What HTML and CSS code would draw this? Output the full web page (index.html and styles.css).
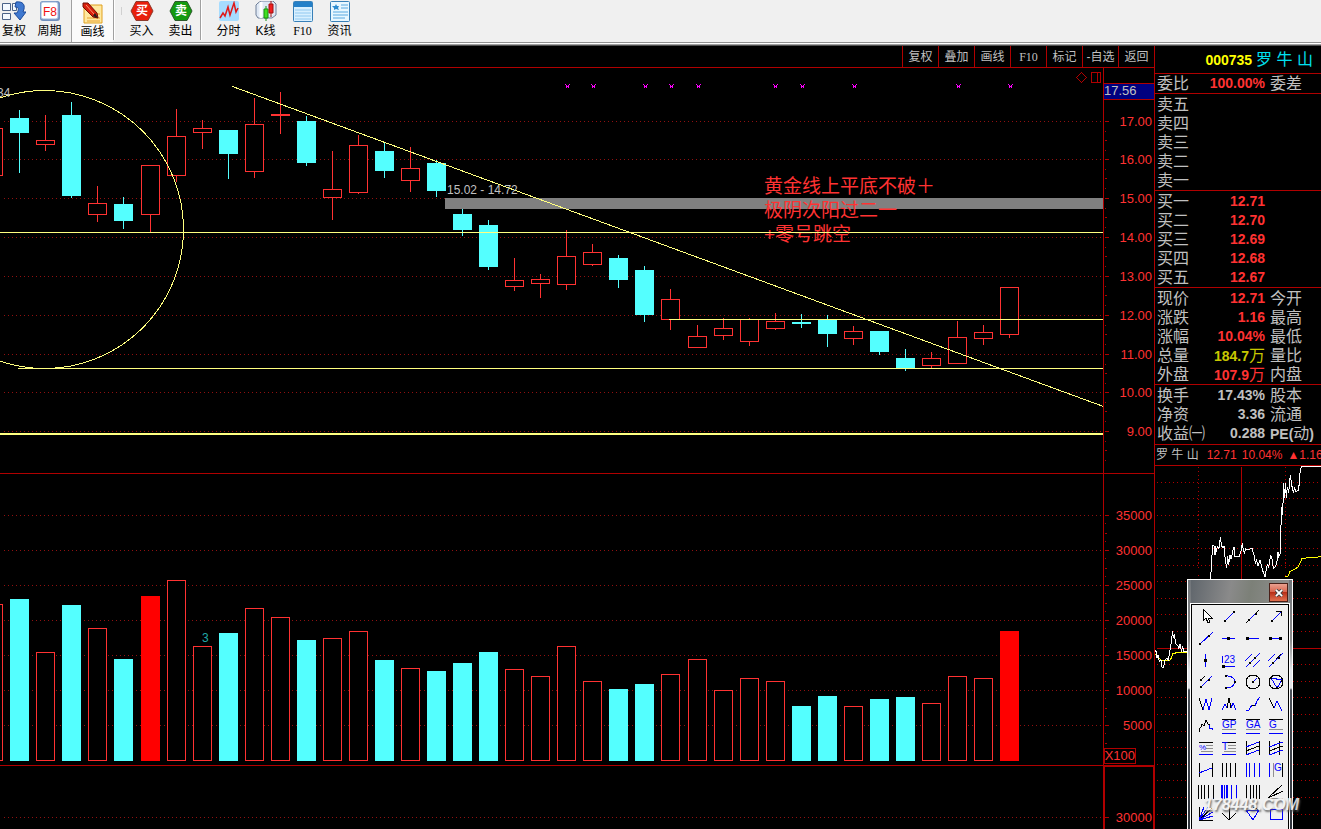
FILE: index.html
```html
<!DOCTYPE html>
<html lang="zh-CN">
<head>
<meta charset="utf-8">
<title>罗牛山 000735</title>
<link rel="stylesheet" href="styles.css">
</head>
<body>
<header class="toolbar">
  <button class="tool tool-first"><svg width="24" height="20" viewBox="0 0 24 20"><g stroke="#4a6288" fill="#f4f9ff"><path d="M.5 2.500h8v7h-8zM.5 12.500h8v6h-8zM10.500 2.500h4v7h-4z"/></g><path d="M14 1c7-1 9 3 8 7l-1 3h3l-6 8-6-7h3c2-4 2-6-2-6z" fill="#3f78d0" stroke="#1c4b9a"/></svg><span>复权</span></button>
  <button class="tool tool-wide"><svg width="22" height="20" viewBox="0 0 22 20"><rect x="1" y="0" width="20" height="20" rx="3" fill="#6f8fbd"/><rect x="2" y="1" width="17" height="17" rx="2" fill="#fff" stroke="#9ab4d8"/><text x="4" y="15" class="key">F8</text></svg><span>周期</span></button>
  <button class="tool tool-on" aria-pressed="true"><svg width="22" height="22" viewBox="0 0 22 22"><path d="M2 3h18v18H2z" fill="#ffe9a0" stroke="#e0a020"/><path d="M5 16h13M5 19h13M14 12h4" stroke="#e8a030"/><path d="M1 1l5 0 9 10 1 5-5-1L1 5z" fill="#d8200c" stroke="#701008"/><path d="M13 11l3 5-5-2z" fill="#222"/><path d="M4 3l8 9" stroke="#ff9070"/></svg><span>画线</span></button>
  <i class="rule"></i><i class="grip"></i>
  <button class="tool tool-trade"><svg width="24" height="20" viewBox="0 0 24 20"><path d="M6 .5h12l5 9.500-5 9.500H6L1 10z" fill="#e8200c" stroke="#8d3a2c"/><text x="12" y="14" class="badge">买</text></svg><span>买入</span></button>
  <button class="tool tool-trade"><svg width="24" height="20" viewBox="0 0 24 20"><path d="M6 .5h12l5 9.500-5 9.500H6L1 10z" fill="#149a10" stroke="#2c5a2c"/><text x="12" y="14" class="badge">卖</text></svg><span>卖出</span></button>
  <i class="rule rule-gap"></i>
  <button class="tool"><svg width="20" height="20" viewBox="0 0 20 20"><rect width="20" height="20" rx="2" fill="#a6dcff"/><path d="M1 17l3-5 2 3 3-9 2 8 4-12 2 9 2-4" fill="none" stroke="#e01818" stroke-width="1.500"/></svg><span>分时</span></button>
  <button class="tool"><svg width="22" height="20" viewBox="0 0 22 20"><path d="M3 2l3-2h12l3 3v11l-4 3H3l-2-3V4z" fill="#dfe8f4" stroke="#6f7f98"/><path d="M6 1v16M16 2v12" stroke="#fff" stroke-width="3"/><path d="M11 5v15" stroke="#109010"/><path d="M9 8h4v9H9z" fill="#40e020" stroke="#189010"/><path d="M16 0v16" stroke="#a01010"/><path d="M14 3h4v9h-4z" fill="#f02020" stroke="#a01010"/></svg><span>K线</span></button>
  <button class="tool"><svg width="20" height="21" viewBox="0 0 20 21"><rect x=".5" y=".5" width="19" height="20" rx="1" fill="#d8f0ff" stroke="#3880b8"/><path d="M1 1h18v5H1z" fill="#2480c8"/><path d="M2 9h16M2 12h16M2 15h16M2 18h16" stroke="#90c8f0"/></svg><span class="serif">F10</span></button>
  <button class="tool"><svg width="20" height="21" viewBox="0 0 20 21"><rect x=".5" y=".5" width="19" height="20" rx="1" fill="#e8f7ff" stroke="#3880b8"/><path d="M6 3l1 2h2L8 7l1 2-3-1-2 1V7L2 5h3z" fill="#2c8cd0"/><path d="M11 4h7M11 7h7M3 11h15M3 14h15M3 17h12" stroke="#58a8e0"/></svg><span>资讯</span></button>
</header>
<div class="rail"></div>

<main class="workspace">
  <section class="charts">
    <nav class="tabs">
      <button>复权</button><button>叠加</button><button>画线</button><button class="serif">F10</button><button>标记</button><button>-自选</button><button>返回</button>
    </nav>
    <svg class="plot" viewBox="0 68 1154 761" preserveAspectRatio="xMinYMin meet" role="img" aria-label="日K线与成交量">
      <g id="grid" class="grid" transform="translate(.5 .5)"></g>
      <rect class="gap" x="445" y="198" width="658" height="11"/>
      <g id="bars" transform="translate(.5 .5)"></g>
      <g class="note">
        <text x="764" y="193">黄金线上平底不破＋</text>
        <text x="764" y="217">极阴次阳过二一</text>
        <text x="764" y="241">+零号跳空</text>
      </g>
      <g class="drawn" transform="translate(.5 .5)">
        <circle cx="44" cy="229" r="139"/>
        <path d="M-1 232H1103M17 368H1103M668 319H1103M232 86L1103 406"/>
        <path d="M-1 433H1103M-1 434H1103"/>
      </g>
      <g id="marks" class="marks" transform="translate(.5 .5)"></g>
      <g class="frame" transform="translate(.5 .5)">
        <path d="M1103 67V828M-1 473H1153M-1 765H1153M1103 766H1153M1104 766V828M1153 766V828"/>
        <path id="ticks"/>
        <path d="M1081 72l5 5-5 5-5-5zM1091 72h9v10h-9zM1097 72v10"/>
        <path class="last" d="M1103 83h51v16h-51z"/>
        <path d="M1104 748h31v15h-31z"/>
      </g>
      <g class="quiet">
        <text x="-3" y="97">34</text>
        <text x="447" y="194">15.02 - 14.72</text>
        <text x="1104" y="95" class="big">17.56</text>
        <text x="202" y="642" class="teal">3</text>
      </g>
      <g id="labels" class="labels"><text x="1135" y="760">X100</text></g>
    </svg>
  </section>

  <aside class="quote">
    <h1 class="title"><b>000735</b><span>罗 牛 山</span></h1>
    <dl class="rows rows-top"><dt>委比</dt><dd>100.00%</dd><dt>委差</dt></dl>
    <dl class="rows">
      <dt>卖五</dt><dd></dd><dt></dt>
      <dt>卖四</dt><dd></dd><dt></dt>
      <dt>卖三</dt><dd></dd><dt></dt>
      <dt>卖二</dt><dd></dd><dt></dt>
      <dt>卖一</dt><dd></dd><dt></dt>
    </dl>
    <dl class="rows">
      <dt>买一</dt><dd>12.71</dd><dt></dt>
      <dt>买二</dt><dd>12.70</dd><dt></dt>
      <dt>买三</dt><dd>12.69</dd><dt></dt>
      <dt>买四</dt><dd>12.68</dd><dt></dt>
      <dt>买五</dt><dd>12.67</dd><dt></dt>
    </dl>
    <dl class="rows">
      <dt>现价</dt><dd>12.71</dd><dt>今开</dt>
      <dt>涨跌</dt><dd>1.16</dd><dt>最高</dt>
      <dt>涨幅</dt><dd>10.04%</dd><dt>最低</dt>
      <dt>总量</dt><dd class="vol">184.7<span>万</span></dd><dt>量比</dt>
      <dt>外盘</dt><dd>107.9<span>万</span></dd><dt>内盘</dt>
    </dl>
    <dl class="rows rows-base">
      <dt>换手</dt><dd>17.43%</dd><dt>股本</dt>
      <dt>净资</dt><dd>3.36</dd><dt>流通</dt>
      <dt>收益㈠</dt><dd>0.288</dd><dt><b>PE(</b>动<b>)</b></dt>
    </dl>
    <p class="strip"><span class="strip-name">罗 牛 山</span><span>12.71</span><span>10.04%</span><span>▲1.16</span></p>
    <svg class="mini" viewBox="0 0 166 363" preserveAspectRatio="xMinYMin slice" role="img" aria-label="分时走势">
      <g id="minigrid" class="minigrid" transform="translate(.5 .5)"></g>
      <g class="trace" transform="translate(-5 -26) scale(.3333)">
        <path class="avg" d="M406 410L414 408 420 395 426 392 434 388 445 380 450 370 456 355 480 353 516 350M13 640L20 645 28 655 36 662 58 662 64 655 68 642 80 638 112 636"/>
        <path d="M182 416L186 345 189 315 192 318 195 345 197 318 199 335 202 320 205 325 208 322 211 292 215 318 219 325 222 318 226 360 230 385 233 348 236 375 240 345 243 358 248 335 252 320 255 350 268 350 274 330 277 310 279 325 284 342 286 325 292 330 306 325 312 345 316 370 320 360 324 378 330 360 336 385 341 400 345 412 350 380 353 375 356 382 362 345 366 358 370 385 376 380 380 372 384 335 386 350 390 345 395 200 398 225 401 130 404 175 407 130 409 175 412 140 416 160 421 105 425 135 430 155 434 145 438 155 446 150 450 100 454 80 516 80"/>
        <path d="M13 640L18 632 20 655 24 645 28 665 33 660 36 682 41 682 44 662 50 655 55 660 60 630 64 605 68 572 70 595 73 588 78 612 84 618 86 628 90 612 94 632 98 620 102 635 112 635"/>
      </g>
    </svg>
  </aside>
</main>

<div class="palette" role="dialog" aria-label="画线工具">
  <div class="palette-bar"><button class="close" aria-label="关闭"><svg width="8" height="8" viewBox="0 0 9 9"><path d="M1 1l7 7M8 1L1 8" stroke="#444" stroke-width="4"/><path d="M1 1l7 7M8 1L1 8" stroke="#fff" stroke-width="2"/></svg></button></div>
  <div class="palette-grid">
    <button><svg viewBox="0 0 16 16"><path class="k" d="M5 1v12l3-3 2 5 2-1-2-4h4z" fill="#fff"/></svg></button>
    <button><svg viewBox="0 0 16 16"><path d="M4 13l9-9"/><path class="d" d="M3 12h2v2H3zM12 3h2v2h-2z"/></svg></button>
    <button><svg viewBox="0 0 16 16"><path class="k" d="M1 15L14 2"/><path d="M5 11l6-6"/><path class="d" d="M3 11h2v2H3zM10 5h2v2h-2z"/></svg></button>
    <button><svg viewBox="0 0 16 16"><path d="M4 13l9-9"/><path class="k" d="M8 3h5v5"/><path class="d" d="M3 12h2v2H3z"/></svg></button>

    <button><svg viewBox="0 0 16 16"><path d="M2 14L15 2"/><path class="d" d="M1 13h2v2H1zM10 5h2v2h-2z"/></svg></button>
    <button><svg viewBox="0 0 16 16"><path d="M1 8h13"/><path class="d" d="M6 7h3v3H6z"/></svg></button>
    <button><svg viewBox="0 0 16 16"><path d="M2 8h12"/><path class="d" d="M1 7h3v3H1z"/></svg></button>
    <button><svg viewBox="0 0 16 16"><path d="M2 8h12"/><path class="d" d="M1 7h3v3H1zM11 7h3v3h-3z"/></svg></button>

    <button><svg viewBox="0 0 16 16"><path d="M7 2v13"/><path class="d" d="M6 7h3v3H6z"/></svg></button>
    <button><svg viewBox="0 0 16 16"><path d="M1 14h13M1 4v7"/><text x="3" y="11">23</text><path class="d" d="M1 13h3v3H1z"/></svg></button>
    <button><svg viewBox="0 0 16 16"><path d="M0 9l7-7M1 15L15 1M8 15l7-7"/><path class="d" d="M4 10h2v2H4zM9 5h2v2H9z"/></svg></button>
    <button><svg viewBox="0 0 16 16"><path d="M0 9l7-7M1 15L15 1"/><path class="k" d="M8 7l5-5"/><path class="d" d="M4 10h2v2H4zM10 5h2v2h-2z"/></svg></button>

    <button><svg viewBox="0 0 16 16"><path class="k" d="M3 6l4-4"/><path d="M3 13L14 2"/><path class="d" d="M2 5h2v2H2zM2 12h2v2H2zM10 5h2v2h-2z"/></svg></button>
    <button><svg viewBox="0 0 16 16"><path d="M5 2c11-1 12 12 0 12"/><path class="d" d="M4 1h2v2H4zM13 7h2v2h-2zM4 13h2v2H4z"/></svg></button>
    <button><svg viewBox="0 0 16 16"><circle class="k" cx="8" cy="8" r="7"/><path d="M8 8l4-4"/><path class="d" d="M7 7h2v2H7z"/></svg></button>
    <button><svg viewBox="0 0 16 16"><circle class="k" cx="8" cy="8" r="7"/><path d="M3 4l11 2-5 8z"/><path class="d" d="M2 3h2v2H2zM13 6h2v2h-2zM8 13h2v2H8z"/></svg></button>

    <button><svg viewBox="0 0 16 16"><path class="k" d="M1 2l4 12"/><path d="M5 14L8 3l3 11 3-12"/></svg></button>
    <button><svg viewBox="0 0 16 16"><path d="M1 14l3-6 2 4"/><path class="k" d="M6 12L8 2l2 10"/><path d="M10 12l2-5 3 7"/></svg></button>
    <button><svg viewBox="0 0 16 16"><path d="M1 14h3l3-5 3 1 2-5 3-4"/><path class="k" d="M7 9l3 1"/></svg></button>
    <button><svg viewBox="0 0 16 16"><path class="k" d="M1 2l5 10"/><path d="M6 12l3-7 5 10"/></svg></button>

    <button><svg viewBox="0 0 16 16"><path class="k" d="M1 14v-3l2-2 1-3 2 2 2-6 2 4 2 1"/><path d="M11 7l1 4 2-1 1 2"/></svg></button>
    <button><svg viewBox="0 0 16 16"><path class="k" d="M1 1h14"/><path d="M1 15h14"/><path class="g" d="M1 11h14"/><text x="1" y="10">GP</text></svg></button>
    <button><svg viewBox="0 0 16 16"><path class="k" d="M1 1h14"/><path d="M1 15h14"/><path class="g" d="M1 11h14"/><text x="1" y="10">GA</text></svg></button>
    <button><svg viewBox="0 0 16 16"><path class="k" d="M1 1h14"/><path d="M1 15h14"/><path class="g" d="M1 11h14"/><text x="1" y="10">G</text></svg></button>

    <button><svg viewBox="0 0 16 16"><path class="k" d="M1 2h14"/><path d="M1 14h14"/><path class="g" d="M8 5h7M8 8h7M3 11h12"/><text x="1" y="10" class="tiny">%</text></svg></button>
    <button><svg viewBox="0 0 16 16"><path class="k" d="M1 2h14"/><path d="M1 14h14"/><path class="g" d="M7 5h8M7 8h8M3 11h12"/><text x="1" y="10">T</text></svg></button>
    <button><svg viewBox="0 0 16 16"><path class="k" d="M1 1v14M14 1v14M1 11l13-5"/><path d="M1 7l13-5M1 15l13-5"/></svg></button>
    <button><svg viewBox="0 0 16 16"><path class="k" d="M1 1v14M11 1v14M1 11l14-5"/><path d="M1 7l14-5M1 15l14-5"/></svg></button>

    <button><svg viewBox="0 0 16 16"><path class="k" d="M1 1v14M14 1v14"/><path d="M1 11l13-5"/></svg></button>
    <button><svg viewBox="0 0 16 16"><path class="k" d="M1 1v14M5 1v14M9 1v14M14 1v14"/></svg></button>
    <button><svg viewBox="0 0 16 16"><path d="M1 1v14M4 1v14M9 1v14M14 1v14"/></svg></button>
    <button><svg viewBox="0 0 16 16"><path d="M1 1v14"/><path class="g" d="M5 1v14"/><path class="k" d="M14 1v14"/><text x="6" y="9">G</text></svg></button>

    <button><svg viewBox="0 0 16 16"><path class="k" d="M0 1v14M3 1v14M6 1v14M10 1v14M15 1v14"/></svg></button>
    <button><svg viewBox="0 0 16 16"><path d="M0 1v14M1 1v14M3 1v14M5 1v14M6 1v14M10 1v14M15 1v14"/></svg></button>
    <button><svg viewBox="0 0 16 16"><path class="k" d="M1 1v14M5 1v14M8 1v14M11 1v14M14 1v14"/></svg></button>
    <button><svg viewBox="0 0 16 16"><path class="k" d="M0 14L14 1M0 14l15-7"/><path class="g" d="M0 14h15"/></svg></button>

    <button><svg viewBox="0 0 16 16"><path class="k" d="M1 1v13h14M1 14L14 2"/><path d="M1 14L6 1M1 14L10 1M1 14l14-8M1 14l14-4"/></svg></button>
    <button><svg viewBox="0 0 16 16"><path class="k" d="M8 1v13M1 7l7 7 7-7"/></svg></button>
    <button><svg viewBox="0 0 16 16"><path d="M1 4l13 0-6 10z"/><path class="k" d="M8 1l6 3"/></svg></button>
    <button><svg viewBox="0 0 16 16"><path d="M2 3h12v10H2z"/></svg></button>
  </div>
</div>
<div class="mark">178448.COM</div>
<script src="chart.js"></script>
</body>
</html>
```
FILE: styles.css
```css
* { box-sizing: border-box; }
body {
  margin: 0;
  height: 100vh;
  display: flex;
  flex-direction: column;
  overflow: hidden;
  position: relative;
  background: #000;
  color: #c0c0c0;
  font: 12px/16px "Liberation Sans", "Noto Sans CJK SC", sans-serif;
}
button {
  margin: 0;
  padding: 0;
  border: 0;
  background: none;
  color: inherit;
  font: inherit;
}
.serif { font-family: "Liberation Serif", serif; }

.toolbar {
  flex: none;
  display: flex;
  height: 43px;
  background: #f0f0f0;
  border-bottom: 1px solid #909090;
  color: #000;
}
.tool {
  width: 37px;
  display: flex;
  flex-direction: column;
  align-items: center;
  justify-content: space-between;
  padding: 1px 0 3px;
}
.tool-first { width: 28px; }
.tool-wide { width: 43px; }
.tool-on {
  width: 42px;
  padding: 2px 0;
  background: #fafafa;
  border-left: 1px solid #a0a0a0;
}
.tool-trade { width: 39px; }
.tool svg { flex: none; }
.tool span { white-space: nowrap; }
.rule {
  width: 2px;
  margin: 0 6px 2px 0;
  background: #a0a0a0;
  border-right: 1px solid #fff;
}
.rule-gap { margin: 0 8px 2px 0; }
.grip {
  width: 1px;
  height: 8px;
  margin: 7px 0 0;
  background: #d0d0d0;
}
.key { font: 12px "Liberation Sans", sans-serif; fill: #f01010; }
.badge {
  font: bold 12px "Noto Sans CJK SC", sans-serif;
  fill: #fff;
  text-anchor: middle;
}
.rail {
  flex: none;
  height: 3px;
  background: linear-gradient(#fff 1px, #a0a0a0 1px 2px, #505050 2px);
}

.workspace { flex: 1; display: flex; min-height: 0; }
.charts { flex: 1; min-width: 0; display: flex; flex-direction: column; }
.tabs {
  flex: none;
  height: 22px;
  display: flex;
  justify-content: flex-end;
  border-bottom: 1px solid #b00000;
}
.tabs button {
  width: 36px;
  border-left: 1px solid #b00000;
  white-space: nowrap;
}
.plot { flex: 1; min-height: 0; width: 100%; display: block; }
.plot g, .mini g, .gap { shape-rendering: crispEdges; }
.grid { stroke: #901010; stroke-dasharray: 1 3; }
.gap { fill: #808080; }
.up { stroke: #ff3232; fill: #000; }
.down { stroke: #54ffff; fill: #54ffff; }
.surge { stroke: #f00; fill: #f00; }
.drawn { stroke: #ffff80; fill: none; }
.marks { stroke: #ff00ff; fill: none; }
.frame { stroke: #b00000; fill: none; }
.frame .last { fill: #000080; }
.note { fill: #ff3232; font-size: 19px; }
.quiet { fill: #c0c0c0; font-size: 12px; }
.quiet .big { font-size: 13px; }
.quiet .teal { fill: #20a8a8; }
.labels { fill: #ff3232; font-size: 13px; text-anchor: end; }

.quote {
  flex: none;
  width: 167px;
  display: flex;
  flex-direction: column;
  border-left: 1px solid #b00000;
  overflow: hidden;
}
.title {
  flex: none;
  height: 28px;
  margin: 0;
  padding: 0 8px 0 0;
  display: flex;
  justify-content: flex-end;
  align-items: center;
  gap: 4px;
  border-bottom: 1px solid #b00000;
  font-size: 14px;
  font-weight: normal;
}
.title b { color: #ff0; }
.title span { color: #00e0f0; font-size: 16px; white-space: nowrap; }
.rows {
  flex: none;
  display: grid;
  grid-template-columns: 48px 60px 1fr;
  grid-auto-rows: 19px;
  margin: 0;
  padding: 1px 0 0 2px;
  border-bottom: 1px solid #b00000;
  line-height: 19px;
}
.rows-top { padding-top: 0; }
.rows dt { font-size: 16px; white-space: nowrap; }
.rows dt:nth-of-type(even) { padding-left: 5px; }
.rows dt b { font-size: 14px; }
.rows dd {
  margin: 0;
  color: #ff3232;
  font-size: 14px;
  font-weight: bold;
  text-align: right;
  white-space: nowrap;
}
.rows dd span { font-size: 16px; font-weight: normal; }
.rows .vol { color: #c8c800; }
.rows-base { padding-bottom: 1px; }
.rows-base dd { color: #c0c0c0; }
.strip {
  flex: none;
  height: 21px;
  margin: 0;
  padding-left: 1px;
  display: flex;
  align-items: center;
  gap: 5px;
  border-bottom: 1px solid #b00000;
  color: #ff3232;
  white-space: nowrap;
}
.strip-name { color: #c0c0c0; padding-right: 3px; }
.mini { flex: 1; min-height: 0; width: 100%; display: block; }
.minigrid { stroke: #b00000; fill: none; }
.minigrid .dots { stroke-dasharray: 1 3; }
.trace { stroke: #fff; fill: none; }
.trace path { vector-effect: non-scaling-stroke; }
.trace .avg { stroke: #ff0; }

.palette {
  position: absolute;
  right: 28px;
  top: 579px;
  width: 106px;
  bottom: 0;
  display: flex;
  flex-direction: column;
  padding: 0 3px;
  overflow: hidden;
  border: 1px solid #fff;
  border-bottom: 0;
  background: linear-gradient(#70757a, #8c8c8c 60px, #e0e4e8 90px 108px, #4c525a 110px, #30343c);
}
.palette-bar {
  flex: none;
  height: 24px;
  display: flex;
  justify-content: flex-end;
  align-items: flex-start;
  padding: 3px 1px;
  background: linear-gradient(100deg, #60666c, #8a8a8a 40%, #7c8078 60%, #909090);
}
.close {
  width: 19px;
  height: 19px;
  display: flex;
  align-items: center;
  justify-content: center;
  border: 1px solid #f0b8a8;
  outline: 1px solid #4a2018;
  outline-offset: -1px;
  background: linear-gradient(#e8a090, #d86048 50%, #b83018 50%, #e07050);
}
.palette-grid {
  flex: 1;
  display: grid;
  grid-template-columns: repeat(4, 1fr);
  grid-auto-rows: 22px;
  padding: 0 0 0 2px;
  background: #f0f0f0;
  border: 1px solid #000;
  border-bottom: 0;
  outline: 1px solid #fff;
}
.palette-grid button { display: flex; align-items: center; justify-content: center; }
.palette-grid svg {
  width: 16px;
  height: 16px;
  fill: none;
  stroke: #00f;
  overflow: visible;
  shape-rendering: crispEdges;
}
.palette-grid .k { stroke: #000; }
.palette-grid .g { stroke: #909090; }
.palette-grid .d { fill: #000; stroke: none; }
.palette-grid text { fill: #00f; stroke: none; font-size: 10px; }
.palette-grid .tiny { font-size: 8px; }
.mark {
  position: absolute;
  right: 22px;
  bottom: 12px;
  color: #f4f4f4;
  font: italic bold 16px/24px "Liberation Sans", sans-serif;
  text-shadow: 1px 2px 2px #555;
  opacity: .85;
  pointer-events: none;
}
```
FILE: chart.js
```js
// kind: u = rise, d = fall, s = rise with surge volume
// [kind, x, high, bodyTop, bodyBottom, low, volumeTop]
const candles = [
  ['u', -16, 128, 128, 176, 176, 604], ['d', 10, 110, 118, 133, 173, 599],
  ['u', 36, 115, 140, 145, 151, 652], ['d', 62, 102, 115, 196, 198, 605],
  ['u', 88, 186, 203, 215, 222, 628], ['d', 114, 197, 204, 221, 229, 659],
  ['s', 141, 165, 165, 215, 232, 596], ['u', 167, 109, 136, 176, 182, 580],
  ['u', 193, 120, 128, 133, 149, 646], ['d', 219, 130, 130, 154, 179, 633],
  ['u', 245, 98, 124, 172, 178, 608], ['u', 271, 92, 114, 116, 134, 617],
  ['d', 297, 116, 121, 163, 166, 640], ['u', 323, 151, 189, 198, 220, 638],
  ['u', 349, 135, 145, 193, 194, 631], ['d', 375, 143, 151, 171, 178, 660],
  ['u', 401, 147, 168, 181, 192, 668], ['d', 427, 160, 163, 191, 197, 671],
  ['d', 453, 209, 214, 230, 236, 663], ['d', 479, 220, 225, 267, 270, 652],
  ['u', 505, 258, 280, 287, 291, 669], ['u', 531, 274, 279, 284, 298, 676],
  ['u', 557, 230, 256, 285, 290, 646], ['u', 583, 244, 252, 265, 266, 681],
  ['d', 609, 255, 258, 280, 288, 689], ['d', 635, 266, 270, 315, 322, 684],
  ['u', 661, 289, 299, 320, 330, 674], ['u', 688, 325, 336, 348, 348, 659],
  ['u', 714, 318, 328, 336, 340, 690], ['u', 740, 318, 319, 342, 346, 678],
  ['u', 766, 313, 321, 329, 330, 681], ['d', 792, 314, 322, 324, 328, 706],
  ['d', 818, 315, 319, 334, 347, 696], ['u', 844, 326, 331, 339, 345, 706],
  ['d', 870, 331, 331, 352, 355, 699], ['d', 896, 349, 358, 368, 371, 697],
  ['u', 922, 352, 358, 366, 368, 703], ['u', 948, 321, 337, 364, 364, 676],
  ['u', 974, 325, 332, 339, 345, 678], ['s', 1000, 287, 287, 335, 338, 631]
];
const prices = [121, 159, 198, 237, 276, 315, 354, 392, 431];
const volumes = [515, 550, 585, 620, 655, 690, 725];

const svg = (parent, tag, attrs, text) => {
  const node = document.createElementNS('http://www.w3.org/2000/svg', tag);
  for (const key in attrs) node.setAttribute(key, attrs[key]);
  if (text) node.textContent = text;
  document.getElementById(parent).append(node);
};
const box = (x, top, bottom) => `M${x} ${top}h18V${bottom - 1}h-18z`;

for (const [kind, x, high, top, bottom, low, vol] of candles) {
  const color = kind === 'd' ? 'down' : 'up';
  svg('bars', 'path', { class: color, d: `M${x + 9} ${high - 1}V${low - 1}` });
  svg('bars', 'path', { class: color, d: box(x, top, bottom) });
  svg('bars', 'path', { class: kind === 's' ? 'surge' : color, d: box(x, vol, 761) });
}

for (const y of [...prices, ...volumes, 817]) {
  svg('grid', 'path', { d: `M3 ${y}H1102` });
}

let ticks = 'M1104 817h4';
prices.forEach((y, i) => {
  ticks += `M1104 ${y}h4M1104 ${y + 10}h1M1104 ${y + 19}h2M1104 ${y + 29}h1`;
  svg('labels', 'text', { x: 1152, y: y + 5 }, (17 - i).toFixed(2));
});
volumes.forEach((y, i) => {
  ticks += `M1104 ${y}h4M1104 ${y + 8}h1M1104 ${y + 18}h2M1104 ${y + 26}h1`;
  svg('labels', 'text', { x: 1152, y: y + 5 }, String(35000 - i * 5000));
});
svg('labels', 'text', { x: 1152, y: 822 }, '30000');
document.getElementById('ticks').setAttribute('d', ticks);

for (const x of [567, 593, 645, 671, 698, 775, 802, 854, 958, 1010]) {
  svg('marks', 'path', { d: `M${x - 2} 84l4 4M${x - 2} 88l4 -4M${x - 2} 86h3` });
}

for (let i = 1; i < 22; i++) {
  const y = Math.round(i * 16.6) - 1;
  svg('minigrid', 'path', { class: i === 11 ? '' : 'dots', d: `M1 ${y}H166` });
}
svg('minigrid', 'path', { class: 'dots', d: 'M43 0V363M130 0V363' });
svg('minigrid', 'path', { d: 'M86 0V363' });
```
